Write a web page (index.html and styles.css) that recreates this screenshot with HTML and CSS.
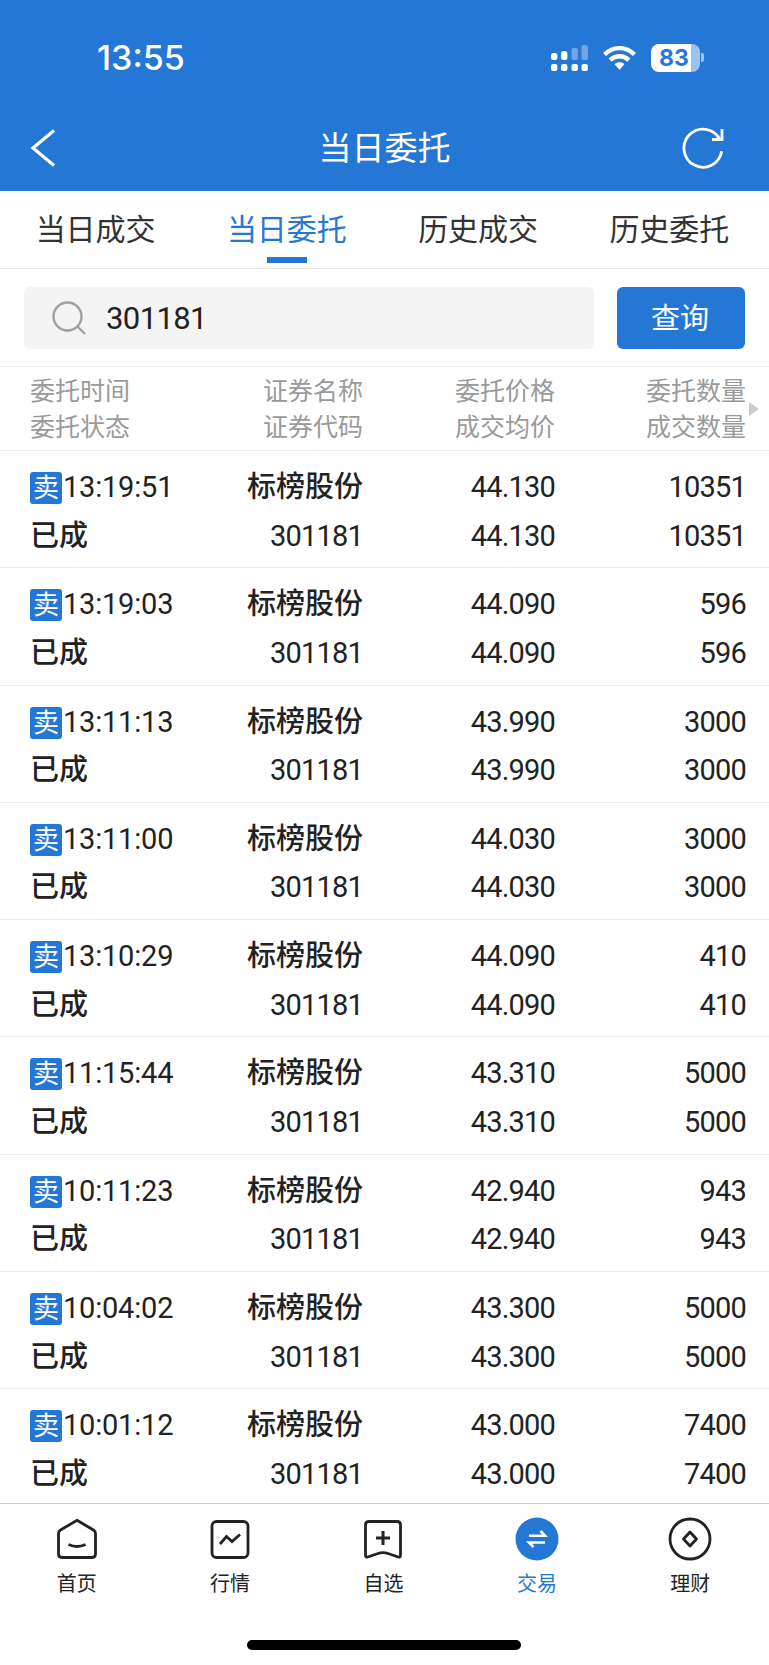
FILE: index.html
```html
<!DOCTYPE html>
<html lang="zh-CN">
<head>
    <meta charset="UTF-8">
    <meta name="viewport" content="width=device-width, initial-scale=1.0">
    <title>当日委托</title>
    <link rel="stylesheet" href="styles.css">
</head>
<body>

<div class="app">
    <header class="top-bar">
        <div class="status-bar">
            <span class="clock">13:55</span>
            <div class="status-icons">
                <svg class="signal" width="37" height="26" viewBox="0 0 37 26">
                    <g fill="#fff">
                        <rect x="0" y="8" width="6.400" height="7" rx="2.500"/>
                        <rect x="10" y="6" width="6.400" height="9" rx="2.500"/>
                        <rect x="0" y="19" width="6.400" height="7" rx="2"/>
                        <rect x="10" y="19" width="6.400" height="7" rx="2"/>
                        <rect x="20.500" y="19" width="6.400" height="7" rx="2"/>
                        <rect x="30.500" y="19" width="6.400" height="7" rx="2"/>
                    </g>
                    <g fill="#fff" opacity="0.35">
                        <rect x="20.500" y="3" width="6.400" height="12" rx="2"/>
                        <rect x="30.500" y="0" width="6.400" height="15" rx="2"/>
                    </g>
                </svg>
                <svg class="wifi" width="33" height="24" viewBox="0 0 33 24">
                    <path d="M1.500 8.500C10.500 0 22.500 0 31.500 8.500M7 14C12.800 9 20.200 9 26 14" fill="none" stroke="#fff" stroke-width="4.400"/>
                    <path d="M11.500 18C14.500 15.500 18.500 15.500 21.500 18L16.500 24Z" fill="#fff"/>
                </svg>
                <div class="battery">
                    <div class="battery-body"><span>83</span></div>
                    <div class="battery-cap"></div>
                </div>
            </div>
        </div>
        <div class="nav-bar">
            <svg class="nav-back" width="26" height="38" viewBox="0 0 26 38">
                <path d="M24 1.500L3 19L24 36.500" fill="none" stroke="#fff" stroke-width="3.200"/>
            </svg>
            <h1>当日委托</h1>
            <svg class="nav-refresh" width="42" height="42" viewBox="0 0 42 42">
                <path d="M36 9.500A19 19 0 1 0 40 21" fill="none" stroke="#fff" stroke-width="2.800" transform="rotate(10 21 21)"/>
                <path d="M30 12.500H40V2" fill="none" stroke="#fff" stroke-width="2.800"/>
            </svg>
        </div>
    </header>

    <nav class="tabs">
        <a href="#">当日成交</a>
        <a href="#" class="active">当日委托</a>
        <a href="#">历史成交</a>
        <a href="#">历史委托</a>
    </nav>

    <div class="search-row">
        <div class="search-box">
            <svg width="34" height="34" viewBox="0 0 34 34">
                <circle cx="15.500" cy="15.500" r="14" fill="none" stroke="#a0a0a0" stroke-width="2.400"/>
                <path d="M25 25L33 33" stroke="#a0a0a0" stroke-width="2.400"/>
            </svg>
            <span>301181</span>
        </div>
        <button>查询</button>
    </div>

    <div class="table-head">
        <div class="cell-left">委托时间<br>委托状态</div>
        <div>证券名称<br>证券代码</div>
        <div>委托价格<br>成交均价</div>
        <div>委托数量<br>成交数量</div>
        <span class="more-arrow"></span>
    </div>

    <div id="rows"></div>

    <footer class="tab-bar">
        <div class="tab-items">
            <div class="tab-item">
                <svg width="44" height="44" viewBox="0 0 44 44">
                    <path d="M22 3.300L38.500 13Q40.500 14.200 40.500 16.500V37Q40.500 40.500 37 40.500H7Q3.500 40.500 3.500 37V16.500Q3.500 14.200 5.500 13Z" fill="none" stroke="#222" stroke-width="2.800"/>
                    <path d="M13.500 27.500Q22 31.500 30.500 27.500" fill="none" stroke="#222" stroke-width="2.800"/>
                </svg>
                <span>首页</span>
            </div>
            <div class="tab-item">
                <svg width="44" height="44" viewBox="0 0 44 44">
                    <rect x="4" y="4.500" width="36" height="36" rx="4.500" fill="none" stroke="#222" stroke-width="2.800"/>
                    <path d="M12 27L18.500 19.500L24 24.500L32 17.500" fill="none" stroke="#222" stroke-width="2.800"/>
                </svg>
                <span>行情</span>
            </div>
            <div class="tab-item">
                <svg width="44" height="44" viewBox="0 0 44 44">
                    <path d="M8 4.500H36Q39.500 4.500 39.500 8V38Q39.500 41 36.500 39.800L27 36.500Q22 34.800 17 36.500L7.500 39.800Q4.500 41 4.500 38V8Q4.500 4.500 8 4.500Z" fill="none" stroke="#222" stroke-width="2.800"/>
                    <path d="M22 14V28M15 21H29" fill="none" stroke="#222" stroke-width="3"/>
                </svg>
                <span>自选</span>
            </div>
            <div class="tab-item current">
                <svg width="44" height="44" viewBox="0 0 44 44">
                    <circle cx="22" cy="22" r="21.500" fill="#2577d6"/>
                    <path d="M14 18.700H30L25.500 14" fill="none" stroke="#fff" stroke-width="2.600"/>
                    <path d="M30 25.500H14L18.500 30.200" fill="none" stroke="#fff" stroke-width="2.600"/>
                </svg>
                <span>交易</span>
            </div>
            <div class="tab-item">
                <svg width="44" height="44" viewBox="0 0 44 44">
                    <circle cx="22" cy="22" r="20" fill="none" stroke="#222" stroke-width="2.800"/>
                    <path d="M22 15L28.500 22L22 29L15.500 22Z" fill="none" stroke="#222" stroke-width="2.800" stroke-linejoin="round"/>
                </svg>
                <span>理财</span>
            </div>
        </div>
        <div class="home-bar"></div>
    </footer>
</div>

<script>
    const orders = [
        { time: "13:19:51", price: "44.130", qty: "10351" },
        { time: "13:19:03", price: "44.090", qty: "596" },
        { time: "13:11:13", price: "43.990", qty: "3000" },
        { time: "13:11:00", price: "44.030", qty: "3000" },
        { time: "13:10:29", price: "44.090", qty: "410" },
        { time: "11:15:44", price: "43.310", qty: "5000" },
        { time: "10:11:23", price: "42.940", qty: "943" },
        { time: "10:04:02", price: "43.300", qty: "5000" },
        { time: "10:01:12", price: "43.000", qty: "7400" }
    ];

    const rows = document.getElementById("rows");
    orders.forEach(item => {
        const row = `<div class="order-row">
                        <div class="cell-left time"><span class="side-tag">卖</span>${item.time}</div>
                        <div>标榜股份</div>
                        <div class="num">${item.price}</div>
                        <div class="num">${item.qty}</div>
                        <div class="cell-left">已成</div>
                        <div class="num">301181</div>
                        <div class="num">${item.price}</div>
                        <div class="num">${item.qty}</div>
                     </div>`;
        rows.insertAdjacentHTML("beforeend", row);
    });
</script>

</body>
</html>
```

FILE: styles.css
```css
* {
    box-sizing: border-box;
}

body {
    margin: 0;
    background-color: #ffffff;
    font-family: Roboto, "Noto Sans CJK SC", sans-serif;
    color: #222;
}

.app {
    position: relative;
    width: 769px;
    height: 1665px;
    overflow: hidden;
}

.top-bar {
    height: 191px;
    background-color: #2577d6;
    color: #fff;
}

.status-bar {
    height: 115px;
    display: flex;
    justify-content: space-between;
    align-items: center;
    padding: 0 65px 0 97px;
}

.clock {
    font-family: Inter, Roboto, sans-serif;
    font-size: 34px;
    font-weight: 500;
}

.status-icons {
    display: flex;
    align-items: center;
    gap: 15px;
}

.battery {
    display: flex;
    align-items: center;
    gap: 1px;
}

.battery-body {
    width: 49px;
    height: 28px;
    border-radius: 8px;
    background: linear-gradient(90deg, #fff 0 82%, #9cc2ef 82%);
    color: #2577d6;
    font-family: Inter, Roboto, sans-serif;
    font-size: 23px;
    font-weight: 700;
    line-height: 28px;
    padding-left: 8px;
}

.battery-cap {
    width: 3px;
    height: 9px;
    border-radius: 0 2px 2px 0;
    background-color: #9cc2ef;
}

.nav-bar {
    height: 76px;
    display: grid;
    grid-template-columns: 1fr auto 1fr;
    align-items: center;
    padding: 0 30px 14px;
}

.nav-back {
    margin-top: 4px;
}

.nav-refresh {
    justify-self: end;
    margin-top: 4px;
    margin-right: 15px;
}

.nav-bar h1 {
    margin: 0;
    font-size: 33px;
    font-weight: 400;
}

.tabs {
    height: 78px;
    display: grid;
    grid-template-columns: repeat(4, 1fr);
    padding-right: 4px;
    border-bottom: 1px solid #e6e6e6;
}

.tabs a {
    position: relative;
    text-align: center;
    font-size: 30px;
    line-height: 77px;
    color: #333;
    text-decoration: none;
}

.tabs a.active {
    color: #2577d6;
}

.tabs a.active::after {
    content: "";
    position: absolute;
    left: 76px;
    bottom: 5px;
    width: 40px;
    height: 6px;
    background-color: #2577d6;
}

.search-row {
    height: 98px;
    display: flex;
    gap: 23px;
    padding: 18px 24px 17px;
    border-bottom: 1px solid #eeeeee;
}

.search-box {
    flex: 1;
    display: flex;
    align-items: center;
    gap: 20px;
    padding-left: 28px;
    background-color: #f4f4f4;
    border-radius: 6px;
}

.search-box span {
    font-size: 31px;
    letter-spacing: -0.6px;
    color: #222;
}

button {
    width: 128px;
    border: none;
    border-radius: 6px;
    padding: 0 2px 4px 0;
    background-color: #2577d6;
    color: white;
    font-family: inherit;
    font-size: 29px;
}

.table-head,
.order-row {
    display: grid;
    grid-template-columns: 201px 132px 192px 191px;
    padding-left: 30px;
    text-align: right;
}

.table-head {
    position: relative;
    height: 84px;
    align-content: center;
    padding-top: 3px;
    font-size: 25px;
    line-height: 36px;
    color: #9a9a9a;
    border-bottom: 1px solid #eeeeee;
}

.more-arrow {
    position: absolute;
    right: 10px;
    top: 35px;
    border-left: 10px solid #cccccc;
    border-top: 7px solid transparent;
    border-bottom: 7px solid transparent;
}

.cell-left {
    text-align: left;
}

.order-row {
    height: 117.300px;
    align-content: start;
    padding-top: 12px;
    font-size: 29px;
    font-weight: 500;
    line-height: 48.500px;
    color: #222;
    border-bottom: 1px solid #eeeeee;
}

.num {
    font-weight: 400;
    letter-spacing: -0.8px;
}

.time {
    font-weight: 400;
    letter-spacing: -0.2px;
}

.side-tag {
    display: inline-block;
    width: 32px;
    height: 32px;
    margin-right: 1px;
    background-color: #2577d6;
    border-radius: 3px;
    color: #fff;
    font-size: 26px;
    line-height: 32px;
    text-align: center;
}

.tab-bar {
    position: absolute;
    left: 0;
    right: 0;
    bottom: 0;
    height: 162px;
    background-color: #fff;
    border-top: 1px solid #cccccc;
}

.tab-items {
    display: grid;
    grid-template-columns: repeat(5, 1fr);
    padding-top: 13px;
    padding-right: 2px;
}

.tab-item {
    display: flex;
    flex-direction: column;
    align-items: center;
    gap: 8px;
    font-size: 20px;
    line-height: 30px;
    color: #222;
}

.tab-item.current {
    color: #2577d6;
}

.home-bar {
    position: absolute;
    left: 247px;
    bottom: 15px;
    width: 274px;
    height: 10px;
    border-radius: 5px;
    background-color: #000;
}
```
